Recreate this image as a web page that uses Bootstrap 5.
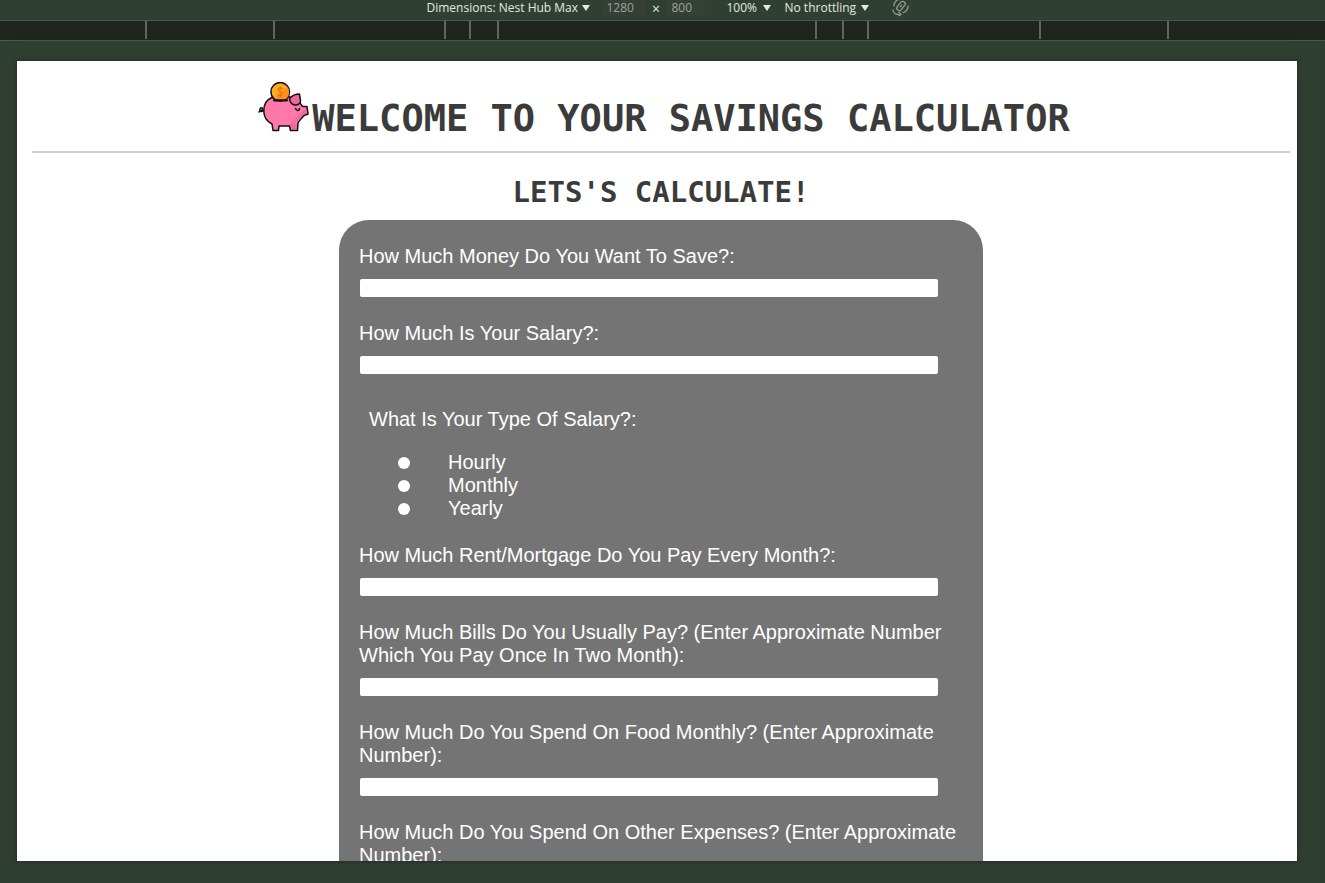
<!DOCTYPE html>
<html lang="en">
<head>
<meta charset="utf-8">
<meta name="viewport" content="width=device-width, initial-scale=1">
<title>Savings Calculator</title>
<link href="https://cdn.jsdelivr.net/npm/bootstrap@5.3.0/dist/css/bootstrap.min.css" rel="stylesheet">
<style>
  body { background: #2f4032; font-family: "Liberation Sans", Arial, sans-serif; }
  .toolbar { height: 21px; padding: 0 0 4px 12px; border-bottom: 1px solid #465c4a; font: 12px/16px "Open Sans", sans-serif; color: #e3e8e0; }
  .toolbar select, .toolbar input { font: inherit; color: inherit; border: 0; padding: 0; height: 16px; background: transparent; appearance: none; }
  .toolbar select { padding-right: 8px; background: url("data:image/svg+xml,%3Csvg xmlns='http://www.w3.org/2000/svg' width='8' height='6'%3E%3Cpath d='M0 0h8L4 6z' fill='%23e3e8e0'/%3E%3C/svg%3E") no-repeat right 5px; }
  .toolbar input { width: 44px; padding-left: 5px; background: #343f36; color: #9ca39b; }
  .toolbar .select-device { width: 163px; margin-right: 12px; }
  .toolbar .select-zoom { width: 44px; margin: 0 14px 0 16px; }
  .toolbar .select-network { width: 84px; margin-right: 22px; }
  .times { width: 21px; text-align: center; padding-top: 1px; font-size: 14px; }
  .rotate-btn { line-height: 0; color: #8b968b; }
  .ruler { height: 20px; padding: 0 11px 1px 0; background: #20261f; border-bottom: 1px solid #465c4a; grid-template-columns: 128px 171px 25px 28px 318px 27px 25px 172px 128px 2px; overflow: hidden; }
  .ruler span { border-left: 2px solid #60675f; }
  .device { margin: 20px 28px 22px 17px; padding: 0 7px 0 15px; min-height: 0; background: #fff; box-shadow: 0 0 2px 1px #28302a, 0 0 16px 2px #303a30; }
  .site-head { padding: 21px 0 0 6px; height: 92px; border-bottom: 2px solid #cfcfcf; }
  .site-head svg { margin-right: 3px; }
  h1, h2 { font-family: "DejaVu Sans Mono", monospace; font-weight: 700; color: #3b3b3b; margin: 0; }
  h1 { font-size: 37px; line-height: 44px; padding-top: 15px; }
  h2 { font-size: 29px; line-height: 35px; padding: 22px 0 10px; }
  .calc { width: 644px; max-width: 100%; padding: 25px 20px; border-radius: 30px; background: #747474; color: #fff; font-size: 20px; line-height: 23px; }
  .calc .entry { margin-bottom: 25px; }
  .entry label { display: block; margin-bottom: 11px; }
  .entry input { display: block; width: 578px; max-width: 100%; height: 18px; margin-left: 1px; border: 0; border-radius: 2px; background: #fff; }
  .calc fieldset { padding-top: 9px; margin-bottom: 24px; }
  .calc legend { font-size: 20px; line-height: 23px; padding-left: 10px; margin-bottom: 20px; }
  .choice input { appearance: none; width: 12px; height: 12px; margin: 1px 38px 0 39px; border-radius: 50%; background: #fff; }
</style>
</head>
<body class="vh-100 d-flex flex-column overflow-hidden">
  <div class="toolbar d-flex justify-content-center align-items-start flex-shrink-0">
    <select class="select-device" aria-label="Device"><option>Dimensions: Nest Hub Max</option></select>
    <input type="text" value="1280" aria-label="Width">
    <span class="times">×</span>
    <input type="text" value="800" aria-label="Height">
    <select class="select-zoom" aria-label="Zoom"><option>100%</option></select>
    <select class="select-network" aria-label="Throttling"><option>No throttling</option></select>
    <button type="button" class="rotate-btn btn p-0 border-0" aria-label="Rotate">
      <svg width="20" height="17" viewBox="0 0 20 17" fill="none" stroke="currentColor" stroke-width="1.4"><g transform="rotate(38 10 6)"><rect x="7.500" y="1" width="5" height="10" rx="2"/><path d="M10 4.500v3M4.500 1.500C2.500 4 2.500 8 4.500 10.500M15.500 1.500C17.500 4 17.500 8 15.500 10.500"/></g><path d="M2 9.500C2 13.500 5 15 9.500 14.500M7.500 12l2.500 2.500-2.500 1.500"/></svg>
    </button>
  </div>
  <div class="ruler d-grid justify-content-center flex-shrink-0" aria-hidden="true">
    <span></span><span></span><span></span><span></span><span></span><span></span><span></span><span></span><span></span><span></span>
  </div>

  <main class="device flex-grow-1 overflow-hidden">
    <header class="site-head d-flex justify-content-center align-items-start">
      <svg width="51" height="50" viewBox="0 0 51 50" class="flex-shrink-0" stroke="#111" stroke-width="1.500" stroke-linejoin="round" stroke-linecap="round" aria-hidden="true">
        <path d="M6 28C2.500 31.500 1 28 2.500 26 5.500 24.500 5 29 1 30" fill="none"/>
        <path d="M13 16C18 13.500 28 13.500 33 15.500C36 14 38 17 40 18.500C42 20 43 22 44 24C46 25 47.500 24.500 49 24.500L50 32C48 33 46 33 45 34.500C43 37 41 39 40 41L39.500 48.500H32.500L31.500 44H21L20.500 48.500H15L14 42C8 39 5.800 34 5.800 29C5.800 23 8 18 13 16Z" fill="#ff78aa"/>
        <path d="M47.500 26.500L48.500 31.500L44 33.500C41 37 39 40 35 41L38.500 42V47H34L32 42" fill="#e65f9b" stroke="none" opacity=".6"/>
        <circle cx="22.200" cy="9.800" r="9.300" fill="#ffac24"/>
        <path d="M29 4.500A8.500 8.500 0 0 1 17 16.500Z" fill="#ff8f1c" stroke="none"/>
        <path d="M24.600 6.700C23 5 19.500 5.800 20 8.200C20.500 10 24.500 9.500 24.500 12C24 14.500 20.500 14.300 19.500 12.500M22.200 4.500V15" fill="none" stroke="#e9730e" stroke-width="1.200"/>
        <path d="M16 18.300H29" stroke-width="2.200"/>
        <path d="M31.500 16.500C34 13.500 38 12 41.500 12C41.500 15 43.500 18 42 21C39 24.500 32 23.500 31.500 16.500Z" fill="#eb679d"/>
        <path d="M37.500 26.500C38.500 29 41.500 29 41.500 26.500" fill="none"/>
      </svg>
      <h1 class="text-nowrap">WELCOME TO YOUR SAVINGS CALCULATOR</h1>
    </header>
    <h2 class="text-center">LETS'S CALCULATE!</h2>

    <form class="calc mx-auto">
      <div class="entry"><label for="goal">How Much Money Do You Want To Save?:</label><input id="goal" type="text"></div>
      <div class="entry"><label for="salary">How Much Is Your Salary?:</label><input id="salary" type="text"></div>
      <fieldset>
        <legend>What Is Your Type Of Salary?:</legend>
        <div class="choice d-flex align-items-center"><input type="radio" name="period" id="hourly"><label for="hourly">Hourly</label></div>
        <div class="choice d-flex align-items-center"><input type="radio" name="period" id="monthly"><label for="monthly">Monthly</label></div>
        <div class="choice d-flex align-items-center"><input type="radio" name="period" id="yearly"><label for="yearly">Yearly</label></div>
      </fieldset>
      <div class="entry"><label for="rent">How Much Rent/Mortgage Do You Pay Every Month?:</label><input id="rent" type="text"></div>
      <div class="entry"><label for="bills">How Much Bills Do You Usually Pay? (Enter Approximate Number Which You Pay Once In Two Month):</label><input id="bills" type="text"></div>
      <div class="entry"><label for="food">How Much Do You Spend On Food Monthly? (Enter Approximate Number):</label><input id="food" type="text"></div>
      <div class="entry"><label for="other">How Much Do You Spend On Other Expenses? (Enter Approximate Number):</label><input id="other" type="text"></div>
    </form>
  </main>
<script src="https://cdn.jsdelivr.net/npm/bootstrap@5.3.0/dist/js/bootstrap.bundle.min.js"></script>
</body>
</html>
